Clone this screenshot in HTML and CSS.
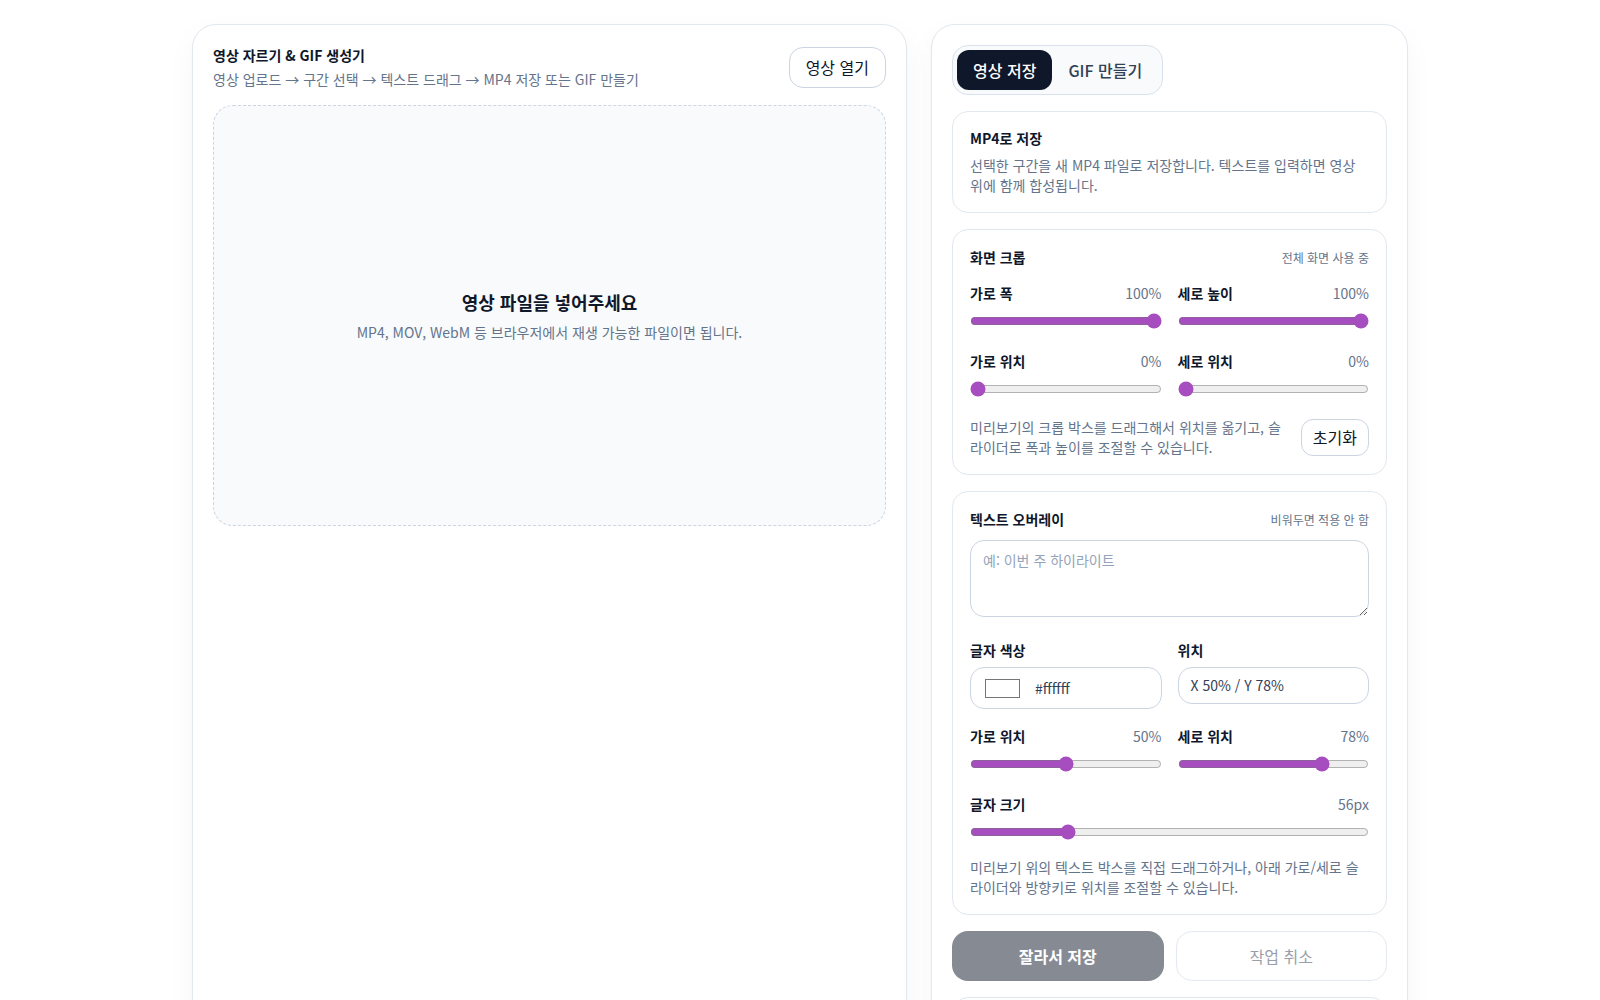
FILE: index.html
```html
<!DOCTYPE html>
<html lang="ko">

<head>
    <meta charset="UTF-8">
    <meta name="viewport" content="width=device-width, initial-scale=1.0">
    <title>영상 자르기 &amp; GIF 생성기</title>
    <link rel="stylesheet" href="styles.css">
</head>

<body>
    <main class="app">
        <section class="card editor">
            <header class="editor-head">
                <div>
                    <h1 class="title">영상 자르기 &amp; GIF 생성기</h1>
                    <p class="subtitle">영상 업로드 → 구간 선택 → 텍스트 드래그 → MP4 저장 또는 GIF 만들기</p>
                </div>
                <button class="btn-outline">영상 열기</button>
            </header>

            <div class="dropzone">
                <strong>영상 파일을 넣어주세요</strong>
                <span>MP4, MOV, WebM 등 브라우저에서 재생 가능한 파일이면 됩니다.</span>
            </div>
        </section>

        <aside class="card side">
            <div class="tabs">
                <button class="tab active">영상 저장</button>
                <button class="tab">GIF 만들기</button>
            </div>

            <section class="panel panel-info">
                <h2 class="panel-title">MP4로 저장</h2>
                <p class="desc">선택한 구간을 새 MP4 파일로 저장합니다. 텍스트를 입력하면 영상 위에 함께 합성됩니다.</p>
            </section>

            <section class="panel">
                <div class="panel-head">
                    <h2 class="panel-title">화면 크롭</h2>
                    <span class="hint">전체 화면 사용 중</span>
                </div>

                <div class="grid2 sliders">
                    <div class="field">
                        <div class="field-label"><b>가로 폭</b><span>100%</span></div>
                        <input type="range" min="10" max="100" value="100">
                    </div>
                    <div class="field">
                        <div class="field-label"><b>세로 높이</b><span>100%</span></div>
                        <input type="range" min="10" max="100" value="100">
                    </div>
                    <div class="field">
                        <div class="field-label"><b>가로 위치</b><span>0%</span></div>
                        <input type="range" min="0" max="100" value="0">
                    </div>
                    <div class="field">
                        <div class="field-label"><b>세로 위치</b><span>0%</span></div>
                        <input type="range" min="0" max="100" value="0">
                    </div>
                </div>

                <div class="note-row">
                    <p class="note">미리보기의 크롭 박스를 드래그해서 위치를 옮기고, 슬라이더로 폭과 높이를 조절할 수 있습니다.</p>
                    <button class="btn-small">초기화</button>
                </div>
            </section>

            <section class="panel">
                <div class="panel-head">
                    <h2 class="panel-title">텍스트 오버레이</h2>
                    <span class="hint">비워두면 적용 안 함</span>
                </div>

                <textarea class="overlay-text" placeholder="예: 이번 주 하이라이트"></textarea>

                <div class="grid2 inputs">
                    <div>
                        <label class="field-name">글자 색상</label>
                        <div class="color-field"><span class="swatch"></span>#ffffff</div>
                    </div>
                    <div>
                        <label class="field-name">위치</label>
                        <div class="text-field">X 50% / Y 78%</div>
                    </div>
                </div>

                <div class="grid2 pos-sliders">
                    <div class="field">
                        <div class="field-label"><b>가로 위치</b><span>50%</span></div>
                        <input type="range" min="0" max="100" value="50">
                    </div>
                    <div class="field">
                        <div class="field-label"><b>세로 위치</b><span>78%</span></div>
                        <input type="range" min="0" max="100" value="78">
                    </div>
                </div>

                <div class="field size-field">
                    <div class="field-label"><b>글자 크기</b><span>56px</span></div>
                    <input type="range" min="24" max="160" value="56">
                </div>

                <p class="note note-bottom">미리보기 위의 텍스트 박스를 직접 드래그하거나, 아래 가로/세로 슬라이더와 방향키로 위치를 조절할 수 있습니다.</p>
            </section>

            <div class="actions">
                <button class="btn-primary" disabled>잘라서 저장</button>
                <button class="btn-ghost" disabled>작업 취소</button>
            </div>

            <section class="panel">
                <h2 class="panel-title">작업 상태</h2>
                <p class="desc">영상을 불러오면 저장 진행 상황이 여기에 표시됩니다.</p>
            </section>
        </aside>
    </main>
</body>

</html>
```

FILE: styles.css
```css
html,
body {
    margin: 0;
    padding: 0;
    background: #fff;
}

body {
    padding: 24px 0;
    font-family: "Noto Sans CJK KR", "Noto Sans", sans-serif;
    color: #0f172a;
}

button,
textarea {
    font-family: inherit;
}

.app {
    max-width: 1216px;
    margin: 0 auto;
    display: grid;
    grid-template-columns: minmax(0, 1fr) 477px;
    gap: 24px;
    align-items: stretch;
}

.card {
    background: #fff;
    border: 1px solid #e2e8f0;
    border-radius: 24px;
    padding: 20px;
    box-shadow: 0 1px 2px rgba(15, 23, 42, .04), 0 10px 30px rgba(15, 23, 42, .04);
}

/* left: editor */
.editor-head {
    display: flex;
    justify-content: space-between;
    align-items: center;
    gap: 16px;
    margin-bottom: 16px;
}

.title {
    margin: 0;
    font-size: 14px;
    line-height: 20px;
    font-weight: 700;
}

.subtitle {
    margin: 4px 0 0;
    font-size: 14px;
    line-height: 20px;
    color: #64748b;
}

.btn-outline {
    font-size: 16px;
    line-height: 21px;
    padding: 9px 16px;
    border: 1px solid #cbd5e1;
    border-radius: 14px;
    background: #fff;
    color: #0f172a;
}

.dropzone {
    aspect-ratio: 16 / 10;
    border: 1px dashed #cbd5e1;
    border-radius: 20px;
    background: #f8fafc;
    display: flex;
    flex-direction: column;
    align-items: center;
    justify-content: center;
    gap: 8px;
    padding-top: 2px;
    box-sizing: border-box;
}

.dropzone strong {
    font-size: 18px;
    line-height: 24px;
    font-weight: 700;
}

.dropzone span {
    font-size: 14px;
    line-height: 20px;
    color: #64748b;
}

/* right: side panel */
.side {
    display: flex;
    flex-direction: column;
    gap: 16px;
}

.tabs {
    align-self: flex-start;
    display: flex;
    padding: 4px;
    border: 1px solid #d9e2ec;
    border-radius: 16px;
    background: #f8fafc;
}

.tab {
    font-size: 16px;
    font-weight: 500;
    line-height: 22px;
    padding: 9px 16px;
    border: 0;
    border-radius: 12px;
    background: transparent;
    color: #334155;
}

.tab.active {
    background: #0f172a;
    color: #fff;
}

.panel {
    border: 1px solid #e2e8f0;
    border-radius: 16px;
    padding: 17px;
}

.panel-info {
    padding-top: 16px;
}

.panel-info .desc {
    margin-top: 7px;
}

.panel-head {
    display: flex;
    justify-content: space-between;
    align-items: center;
}

.panel-title {
    margin: 0;
    font-size: 14px;
    line-height: 20px;
    font-weight: 700;
}

.hint {
    font-size: 12px;
    color: #64748b;
}

.desc {
    margin: 6px 0 0;
    font-size: 14px;
    line-height: 20px;
    color: #64748b;
}

.grid2 {
    display: grid;
    grid-template-columns: 1fr 1fr;
    column-gap: 16px;
    align-items: start;
}

.sliders {
    row-gap: 22px;
    margin-top: 16px;
}

.field-label {
    display: flex;
    justify-content: space-between;
    font-size: 14px;
    line-height: 20px;
    margin-bottom: 10px;
}

.field-label span {
    color: #64748b;
}

input[type=range] {
    display: block;
    width: 100%;
    height: 16px;
    margin: 0;
    accent-color: #a64dbf;
}

.note-row {
    display: flex;
    align-items: center;
    gap: 16px;
    margin-top: 20px;
}

.note {
    flex: 1;
    margin: 0;
    font-size: 14px;
    line-height: 20px;
    color: #64748b;
}

.btn-small {
    flex: none;
    font-size: 16px;
    line-height: 21px;
    padding: 7px 11px;
    border: 1px solid #cbd5e1;
    border-radius: 12px;
    background: #fff;
    color: #0f172a;
}

.overlay-text {
    display: block;
    box-sizing: border-box;
    width: 100%;
    height: 77px;
    margin-top: 11px;
    padding: 9px 12px;
    border: 1px solid #cbd5e1;
    border-radius: 14px;
    font-size: 14px;
    line-height: 20px;
    color: #0f172a;
    resize: vertical;
}

.overlay-text::placeholder {
    color: #94a3b8;
}

.inputs {
    margin-top: 23px;
}

.field-name {
    display: block;
    font-size: 14px;
    line-height: 20px;
    font-weight: 700;
    margin-bottom: 7px;
}

.color-field {
    display: flex;
    align-items: center;
    gap: 15px;
    padding: 10px 14px;
    border: 1px solid #cbd5e1;
    border-radius: 14px;
    font-size: 14px;
    line-height: 20px;
    color: #334155;
}

.swatch {
    width: 33px;
    height: 17px;
    border: 1px solid #767676;
    background: #fff;
}

.text-field {
    padding: 8px 12px;
    border: 1px solid #cbd5e1;
    border-radius: 14px;
    font-size: 14px;
    line-height: 19px;
    color: #334155;
}

.pos-sliders {
    margin-top: 17px;
}

.size-field {
    margin-top: 22px;
}

.note-bottom {
    margin-top: 17px;
}

.actions {
    display: grid;
    grid-template-columns: 1fr 1fr;
    gap: 12px;
}

.btn-primary,
.btn-ghost {
    height: 50px;
    border-radius: 16px;
    font-size: 16px;
    opacity: .5;
}

.btn-primary {
    border: 0;
    background: #0f172a;
    color: #fff;
    font-weight: 600;
}

.btn-ghost {
    border: 1px solid #cbd5e1;
    background: #fff;
    color: #334155;
}
```
